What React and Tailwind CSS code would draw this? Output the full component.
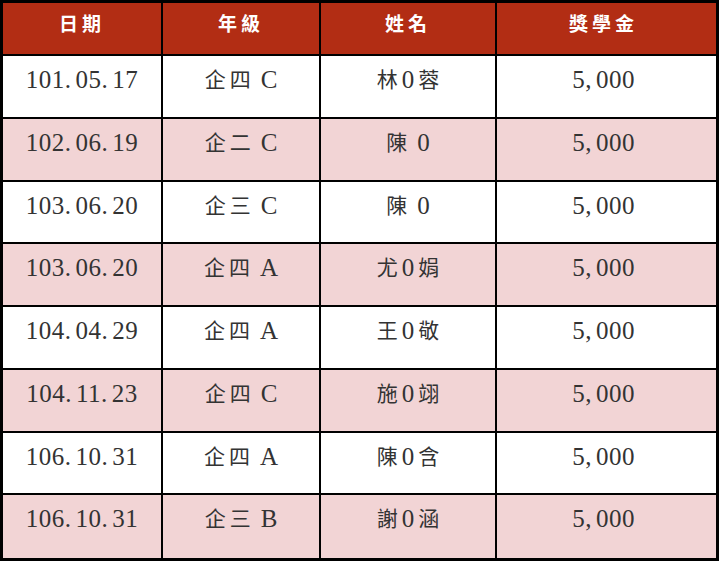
import React from 'react';

// Scholarship list: header row + alternating pink rows
const rows = [
    [ '101.05.17', '企四 C', '林0蓉', '5,000' ],
    [ '102.06.19', '企二 C', '陳 0', '5,000' ],
    [ '103.06.20', '企三 C', '陳 0', '5,000' ],
    [ '103.06.20', '企四 A', '尤0娟', '5,000' ],
    [ '104.04.29', '企四 A', '王0敬', '5,000' ],
    [ '104.11.23', '企四 C', '施0翊', '5,000' ],
    [ '106.10.31', '企四 A', '陳0含', '5,000' ],
    [ '106.10.31', '企三 B', '謝0涵', '5,000' ],
];

const heads = [ '日期', '年級', '姓名', '獎學金' ];

const cols = 'grid grid-cols-[158px_158px_176px_215px]';
const font = { fontFamily: '"Liberation Serif", "Noto Sans CJK TC", serif' };

// mixed CJK / latin text, CJK a bit smaller like the Ming font in the shot
function Cell( { text, loose } ) {
    return [ ...text ].map( ( ch, i ) => {
        if ( /[\u4e00-\u9fff]/.test( ch ) ) {
            return <span key={ i } className="text-[21px] mx-[2px] relative top-[-1px]">{ ch }</span>;
        }
        if ( ch === '.' || ch === ',' ) {
            return <span key={ i } className="mr-[4px]">{ ch }</span>;
        }
        if ( ch === ' ' ) {
            return <span key={ i } className="inline-block w-[6px]" />;
        }
        return <span key={ i } className={ loose ? 'mx-[2px]' : '' }>{ ch }</span>;
    } );
}

export default function App() {
    return (
        <div className="w-[719px] h-[561px] bg-white">
            <div className="border-[3px] border-black" style={ font }>
                <div className={ `${ cols } h-[53px] border-b-2 border-black bg-[#b22d14]` }>
                    { heads.map( ( h, i ) => (
                        <div
                            key={ h }
                            className={ `flex justify-center pt-[12px] text-[19px] leading-none font-bold tracking-[4px] text-white ${ i ? 'border-l-2 border-black' : '' }` }
                        >
                            { h }
                        </div>
                    ) ) }
                </div>
                { rows.map( ( r, ri ) => (
                    <div
                        key={ ri }
                        className={ `${ cols } ${ ri === 2 || ri === 6 ? 'h-[62px]' : 'h-[63px]' } ${ ri < rows.length - 1 ? 'border-b-2 border-black' : '' } ${ ri % 2 ? 'bg-[#f2d4d5]' : 'bg-white' }` }
                    >
                        { r.map( ( c, ci ) => (
                            <div
                                key={ ci }
                                className={ `flex justify-center items-baseline pt-[11px] text-[25px] leading-none text-[#333] ${ ci === 0 || ci === 3 ? 'tracking-[0.5px]' : '' } ${ ci ? 'border-l-2 border-black' : '' }` }
                            >
                                { ci === 0 || ci === 3
                                    ? <div><Cell text={ c } /></div>
                                    : <div className="flex items-baseline"><Cell text={ c } loose /></div> }
                            </div>
                        ) ) }
                    </div>
                ) ) }
            </div>
        </div>
    );
}
